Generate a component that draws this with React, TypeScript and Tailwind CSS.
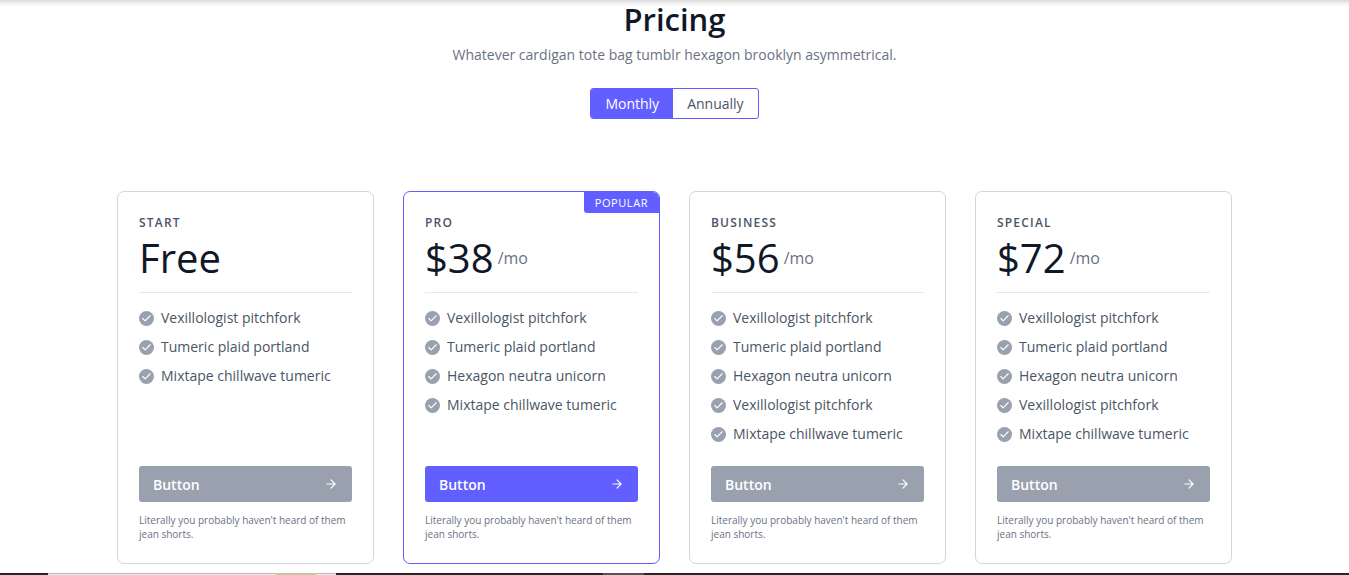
import { useState } from "react";
import clsx from "clsx";

type Plan = {
  name: string;
  price: string;
  period?: string;
  popular?: boolean;
  features: string[];
};

const plans: Plan[] = [
  {
    name: "START",
    price: "Free",
    features: ["Vexillologist pitchfork", "Tumeric plaid portland", "Mixtape chillwave tumeric"],
  },
  {
    name: "PRO",
    price: "$38",
    period: "/mo",
    popular: true,
    features: [
      "Vexillologist pitchfork",
      "Tumeric plaid portland",
      "Hexagon neutra unicorn",
      "Mixtape chillwave tumeric",
    ],
  },
  {
    name: "BUSINESS",
    price: "$56",
    period: "/mo",
    features: [
      "Vexillologist pitchfork",
      "Tumeric plaid portland",
      "Hexagon neutra unicorn",
      "Vexillologist pitchfork",
      "Mixtape chillwave tumeric",
    ],
  },
  {
    name: "SPECIAL",
    price: "$72",
    period: "/mo",
    features: [
      "Vexillologist pitchfork",
      "Tumeric plaid portland",
      "Hexagon neutra unicorn",
      "Vexillologist pitchfork",
      "Mixtape chillwave tumeric",
    ],
  },
];

function CheckBadge() {
  return (
    <span className="inline-flex size-[15px] shrink-0 items-center justify-center rounded-full bg-[#99a1af] text-white">
      <svg
        aria-hidden="true"
        className="size-[11px]"
        viewBox="0 0 24 24"
        fill="none"
        stroke="currentColor"
        strokeWidth="2.5"
        strokeLinecap="round"
        strokeLinejoin="round"
      >
        <path d="M20 6L9 17l-5-5" />
      </svg>
    </span>
  );
}

function PlanCard({ plan }: { plan: Plan }) {
  return (
    <article
      className={clsx(
        "relative flex flex-col overflow-hidden rounded-[7px] border px-[21px] pt-[22px] pb-[22px]",
        plan.popular ? "border-[#615fff]" : "border-[#d1d5dc]",
      )}
    >
      {plan.popular && (
        <span className="absolute top-0 right-0 rounded-bl-[3px] bg-[#615fff] px-[11px] text-[11px] leading-[21px] font-medium tracking-wider text-white">
          POPULAR
        </span>
      )}
      <h2 className="mb-1 text-[12px] leading-[18px] font-semibold tracking-widest text-[#4a5565]">
        {plan.name}
      </h2>
      <p className="mb-[14px] flex items-center border-b border-gray-200 pb-[13px] text-[40px] leading-[43px] text-[#101828]">
        <span>{plan.price}</span>
        {plan.period && (
          <span className="ml-1 text-base text-[#6a7282]">{plan.period}</span>
        )}
      </p>
      <ul className="mb-[21px] flex flex-col gap-[7px]">
        {plan.features.map((feature, i) => (
          <li key={i} className="flex items-center gap-[7px] text-[14px] leading-[22px] text-[#4a5565]">
            <CheckBadge />
            {feature}
          </li>
        ))}
      </ul>
      <button
        type="button"
        className={clsx(
          "mt-auto flex h-9 w-full items-center justify-between rounded-[3px] px-[14px] text-[14px] font-semibold text-white",
          plan.popular ? "bg-[#615fff]" : "bg-[#99a1af]",
        )}
      >
        Button
        <svg
          aria-hidden="true"
          className="size-[14px]"
          viewBox="0 0 24 24"
          fill="none"
          stroke="currentColor"
          strokeWidth="2"
          strokeLinecap="round"
          strokeLinejoin="round"
        >
          <path d="M5 12h14M12 5l7 7-7 7" />
        </svg>
      </button>
      <p className="mt-[11px] text-[10px] leading-[14px] text-[#6a7282]">
        Literally you probably haven't heard of them jean shorts.
      </p>
    </article>
  );
}

export default function App() {
  const [billing, setBilling] = useState("Monthly");

  return (
    <div className="bg-white font-['Open_Sans','Noto_Sans',sans-serif]">
      <div className="-mb-1 h-[7px] bg-linear-to-b from-[#dadada] via-[#f2f2f2] to-white" />
      <main className="px-6">
        <header className="flex flex-col items-center">
          <h1 className="text-[31px] leading-8 font-semibold text-[#101828]">Pricing</h1>
          <p className="mt-[9px] text-[14px] leading-[22px] text-[#6a7282]">
            Whatever cardigan tote bag tumblr hexagon brooklyn asymmetrical.
          </p>
          <div className="mt-[22px] flex overflow-hidden rounded-[3px] border border-[#615fff]">
            {["Monthly", "Annually"].map((option) => (
              <button
                key={option}
                type="button"
                aria-pressed={billing === option}
                onClick={() => setBilling(option)}
                className={clsx(
                  "px-[14px] text-[14px] leading-[29px]",
                  billing === option ? "bg-[#615fff] font-medium text-white" : "text-[#4a5565]",
                )}
              >
                {option}
              </button>
            ))}
          </div>
        </header>
        <section className="mx-auto mt-[72px] grid max-w-[1115px] grid-cols-4 gap-[29px]">
          {plans.map((plan) => (
            <PlanCard key={plan.name} plan={plan} />
          ))}
        </section>
      </main>
      <div className="mt-[9px] flex h-[2px] bg-[#272525]">
        <div className="w-12" />
        <div className="w-[228px] border-t border-[#b8b8b8] bg-[#eeeeee]" />
        <div className="w-10 bg-[#cdc3a0]" />
        <div className="w-5 border-t border-[#b8b8b8] bg-[#eeeeee]" />
        <div className="w-[267px]" />
        <div className="w-[41px] bg-[#555353]" />
      </div>
    </div>
  );
}
